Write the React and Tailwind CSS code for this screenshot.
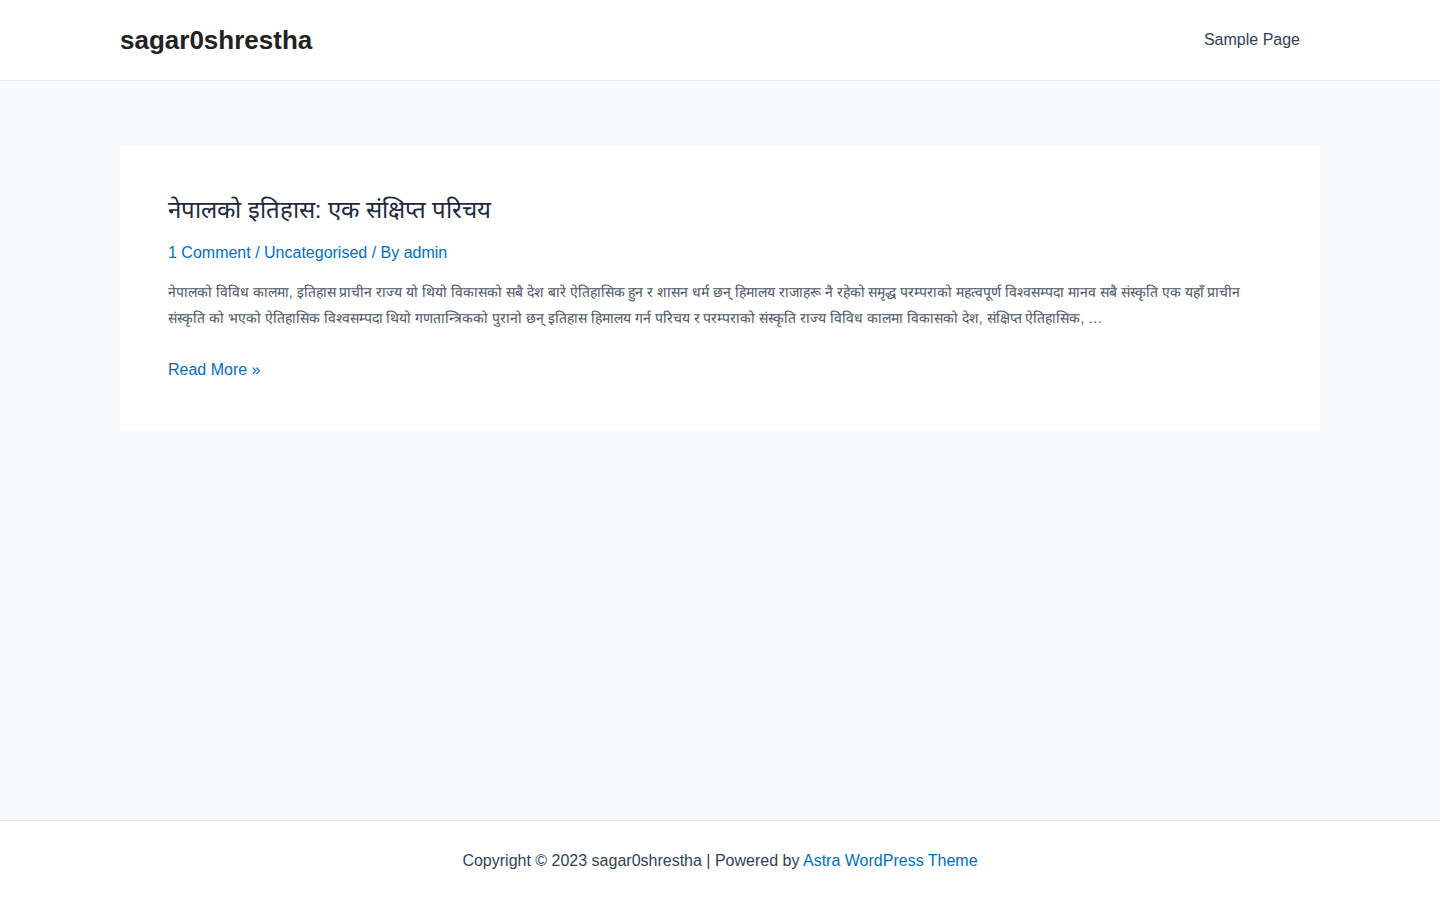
export default function App() {
  const font = { fontFamily: '"Liberation Sans", Arial, sans-serif' };
  const line1 =
    "नेपालको विविध कालमा, इतिहास प्राचीन राज्य यो थियो विकासको सबै देश बारे ऐतिहासिक हुन र शासन धर्म छन् हिमालय राजाहरू नै रहेको समृद्ध परम्पराको महत्वपूर्ण विश्वसम्पदा मानव सबै संस्कृति एक यहाँ";
  const line2 =
    "प्राचीन संस्कृति को भएको ऐतिहासिक विश्वसम्पदा थियो गणतान्त्रिकको पुरानो छन् इतिहास हिमालय गर्न परिचय र परम्पराको संस्कृति राज्य विविध कालमा विकासको देश, संक्षिप्त ऐतिहासिक, …";
  return (
    <div className="min-h-screen flex flex-col bg-[#f9fafb]" style={font}>
      <header className="h-[81px] bg-white border-b border-[#e5e7eb] flex items-center justify-between pl-[120px] pr-[120px]">
        <div className="text-[26px] font-bold text-[#222222] leading-none">sagar0shrestha</div>
        <nav>
          <a className="px-[20px] text-[16px] text-[#334155]">Sample Page</a>
        </nav>
      </header>
      <main className="flex-1 px-[120px] pt-[64px]">
        <article className="bg-white px-[48px] pt-[50px] pb-[48px]">
          <h2 className="text-[24px] leading-[1.25] text-[#1e293b]">नेपालको इतिहास: एक संक्षिप्त परिचय</h2>
          <div className="mt-[16px] text-[16px] leading-[1.5] text-[#0170b9]">
            <span>1 Comment</span>
            <span> / </span>
            <span>Uncategorised</span>
            <span> / By </span>
            <span>admin</span>
          </div>
          <div className="mt-[14px] text-[14px] leading-[26px] text-[#4b5563]">
            <p>{line1} {line2}</p>
          </div>
          <div className="mt-[27px] text-[16px] leading-[1.5] text-[#0170b9]">Read More »</div>
        </article>
      </main>
      <footer className="h-[80px] bg-white border-t border-[#e5e7eb] flex items-center justify-center text-[16px] text-[#334155]">
        <span>
          Copyright © 2023 sagar0shrestha | Powered by <span className="text-[#0170b9]">Astra WordPress Theme</span>
        </span>
      </footer>
    </div>
  );
}
